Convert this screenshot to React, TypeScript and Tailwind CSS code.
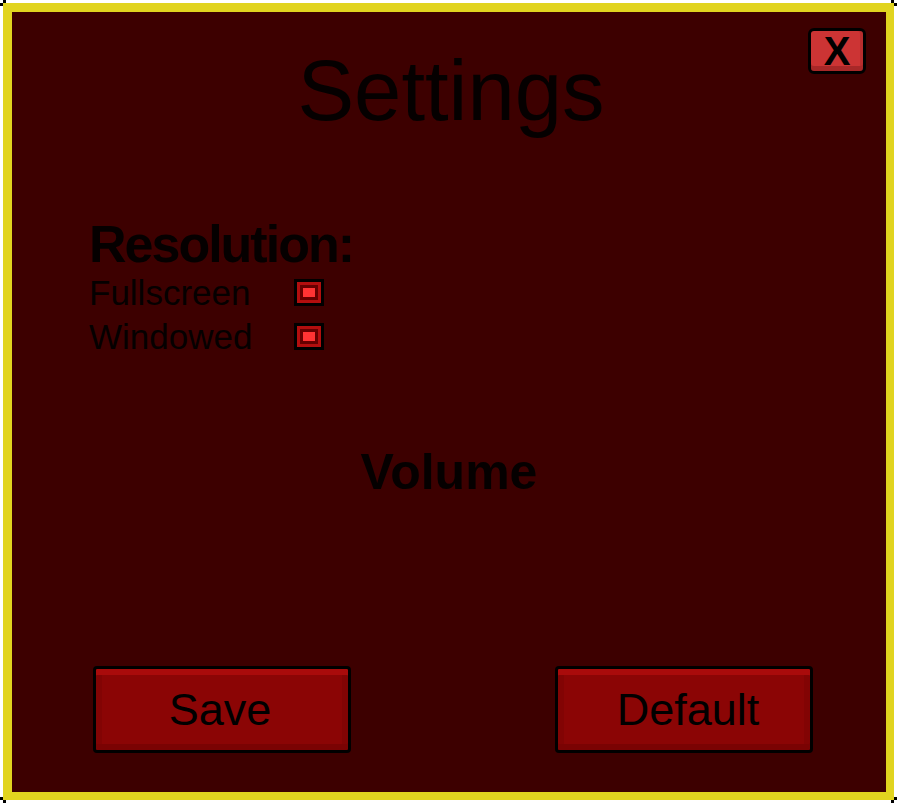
import React from 'react';

const FONT = { fontFamily: '"Liberation Sans", Arial, sans-serif' };

const Checkbox: React.FC = () => (
  <div className="w-[30px] h-[27px] bg-black p-[3px]">
    <div className="w-full h-full bg-[#b20e0e] p-[3px]">
      <div className="w-full h-full bg-[#660000] p-[3px]">
        <div className="w-full h-full bg-[#ff3434]" />
      </div>
    </div>
  </div>
);

const PixelButton: React.FC<{ label: string; className?: string }> = ({ label, className }) => (
  <button
    className={`w-[258px] h-[87px] rounded-[4px] border-[3px] border-black bg-[#8b0505] shadow-[inset_0_6px_0_#a90b0b,inset_0_-6px_0_#7a0303,inset_6px_0_0_#820404,inset_-6px_0_0_#820404] flex items-center justify-center text-[45px] leading-none text-black ${className ?? ''}`}
  >
    {label}
  </button>
);

const App: React.FC = () => {
  return (
    <div className="w-[897px] h-[804px] bg-white pt-[3px] pl-[3px]" style={FONT}>
      <div className="relative w-[891px] h-[797px] bg-[#e1d41f] border-l-[9px] border-t-[9px] border-r-[8px] border-b-[8px] border-[#e1d41f]">
        {/* corner pixels */}
        <span className="absolute -left-[12px] -top-[9px] w-[3px] h-[3px] bg-black" />
        <span className="absolute -left-[9px] -top-[12px] w-[3px] h-[3px] bg-black" />
        <span className="absolute -right-[11px] -top-[9px] w-[3px] h-[3px] bg-black" />
        <span className="absolute -right-[8px] -top-[12px] w-[3px] h-[3px] bg-black" />
        <span className="absolute -left-[12px] -bottom-[8px] w-[3px] h-[3px] bg-black" />
        <span className="absolute -left-[9px] -bottom-[11px] w-[3px] h-[3px] bg-black" />
        <span className="absolute -right-[8px] -bottom-[11px] w-[3px] h-[3px] bg-black" />
        <span className="absolute -right-[11px] -bottom-[8px] w-[3px] h-[3px] bg-black" />

        <div className="relative flex flex-col w-full h-full bg-[#3d0000] pt-[36px] text-[#050000]">
          {/* Close */}
          <button className="absolute top-[16px] right-[20px] w-[58px] h-[46px] rounded-[6px] border-[3px] border-black bg-[#cc3434] shadow-[inset_0_-5px_0_#a82828,inset_-3px_0_0_#b82e2e] flex items-center justify-center text-[40px] font-bold leading-none text-black">
            X
          </button>

          <h1 className="text-center text-[85px] leading-none pl-[4px]">Settings</h1>

          <div className="pl-[77px] mt-[85px]">
            <h2 className="text-[52px] font-bold leading-none tracking-[-2px]">Resolution:</h2>
            <div className="mt-[5px] flex flex-col gap-[9px]">
              <div className="flex items-center h-[35px]">
                <span className="w-[205px] text-[35px] leading-none">Fullscreen</span>
                <Checkbox />
              </div>
              <div className="flex items-center h-[35px]">
                <span className="w-[205px] text-[35px] leading-none">Windowed</span>
                <Checkbox />
              </div>
            </div>
          </div>

          <h2 className="mt-[93px] text-center text-[50px] font-bold leading-none">Volume</h2>

          <div className="flex-1" />

          <div className="flex justify-between pl-[81px] pr-[73px] pb-[39px]">
            <PixelButton label="Save" className="pr-[4px]" />
            <PixelButton label="Default" className="pl-[8px]" />
          </div>
        </div>
      </div>
    </div>
  );
};

export default App;
